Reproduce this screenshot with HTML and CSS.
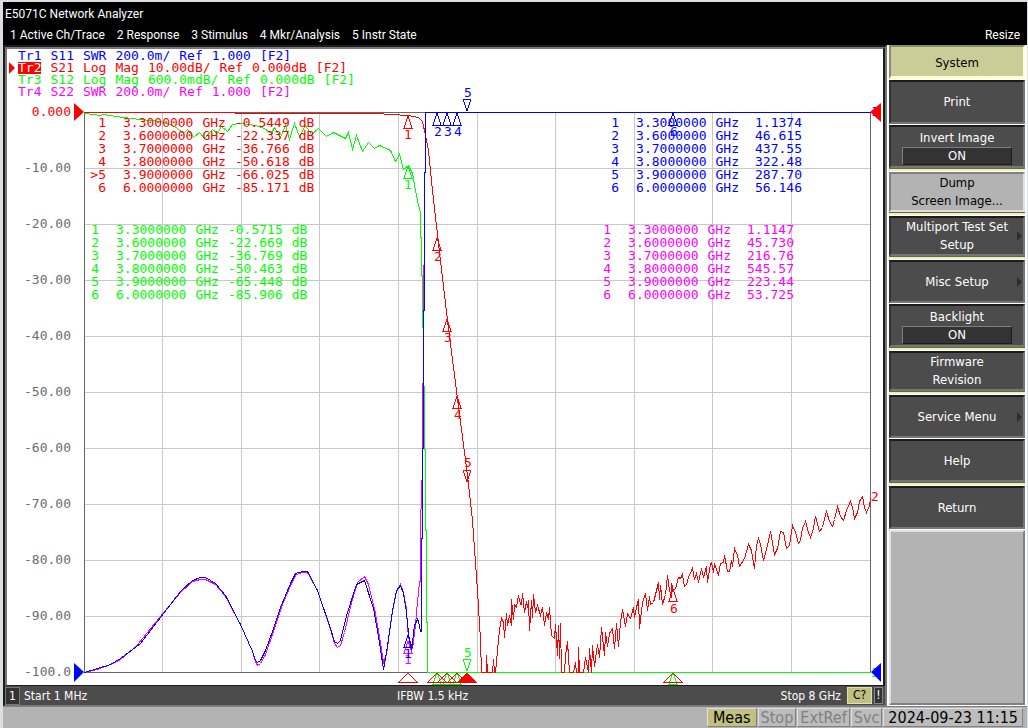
FILE: index.html
```
<!DOCTYPE html>
<html lang="en">
<head>
    <meta charset="UTF-8">
    <meta name="viewport" content="width=device-width, initial-scale=1.0">
    <title>E5071C Network Analyzer</title>
    <link rel="stylesheet" href="styles.css">
</head>
<body>
    <header class="titlebar">
        <div class="title">E5071C Network Analyzer</div>
        <nav class="menu">
            <button>1 Active Ch/Trace</button>
            <button>2 Response</button>
            <button>3 Stimulus</button>
            <button>4 Mkr/Analysis</button>
            <button>5 Instr State</button>
            <button class="resize">Resize</button>
        </nav>
    </header>

    <main class="workspace">
        <section class="channel">
            <div class="screen">
                <svg class="plot" viewBox="7 49 876 636">
                    <defs>
                        <path id="up" d="M0 0L-4 12H4Z"/>
                        <path id="down" d="M0 0L-4 -12H4Z"/>
                        <path id="foot" d="M0 0L-9 9H9Z"/>
                    </defs>

                    <!-- grid -->
                    <g transform="translate(0.5 0.5)">
                        <path class="grid" d="M162 112V672M241 112V672M319 112V672M398 112V672M477 112V672M555 112V672M634 112V672M712 112V672M791 112V672M84 168H870M84 224H870M84 280H870M84 336H870M84 392H870M84 448H870M84 504H870M84 560H870M84 616H870"/>
                        <path class="frame" d="M84 112H870V672H84Z"/>
                    </g>

                    <!-- scale -->
                    <g class="scale">
                        <text class="red" x="71" y="116">0.000</text>
                        <text x="71" y="172">-10.00</text>
                        <text x="71" y="228">-20.00</text>
                        <text x="71" y="284">-30.00</text>
                        <text x="71" y="340">-40.00</text>
                        <text x="71" y="396">-50.00</text>
                        <text x="71" y="452">-60.00</text>
                        <text x="71" y="508">-70.00</text>
                        <text x="71" y="564">-80.00</text>
                        <text x="71" y="620">-90.00</text>
                        <text x="71" y="676">-100.0</text>
                    </g>

                    <!-- traces -->
                    <g transform="translate(0.5 0.5)">
                        <polyline class="trace magenta" points="84,672 97,669 110,664 120,659 132,649 138,643 160,616 180,592 192,581 200,579 205,579 215,584 225,596 240,624 252,651 255,661 257,665 260,663 265,654 273,631 282,604 291,583 296,574 302,572 307,572 317,590 330,629 334,643 337,647 340,645 344,632 351,602 357,582 364,576 368,584 374,608 380,642 383,662 386,654 392,611 396,591 400,584 403,592 406,608 407,628 410,648 412,648 415,625 417,601 419,582 420,580 420,540 421,480 422,480 422,383 423,383 423,300 424,232 424,172 425,172 425,128"/>
                        <polyline class="trace green" points="84,113 100,115 103,114 115,116 140,119 160,121 172,125 177,128 183,133 187,129 193,137 199,132 204,138 212,129 217,133 221,126 227,131 232,124 240,123 255,125 264,128 271,133 274,127 280,137 285,125 289,139 294,123 299,136 305,125 311,134 318,128 326,136 333,132 345,138 348,132 352,149 356,135 362,151 368,142 374,148 379,145 390,150 395,161 399,154 403,169 408,165 412,173 415,190 418,205 420,212 420,237 421,237 421,275 422,275 422,327 423,327 423,386 424,386 424,449 425,449 425,530 426,530 426,622 427,622 427,672 870,672"/>
                        <polyline class="trace red" points="84,112 235,112 235,113 375,113 408,115 418,117 422,121 425,135 428,150 432,190 438,243 447,320 457,398 467,475 472,520 477,590 480,640 481,672 486,672 486,655 487,672 492,672 493,659 494,672 495,672 497,650 499,630 501,618 503,622 504,637 506,613 507,625 509,615 511,625 511,599 513,619 514,604 516,607 518,595 520,604 521,604 522,593 524,612 526,601 527,607 528,600 529,630 531,600 532,617 533,594 535,612 537,605 540,615 542,607 544,625 546,612 548,619 549,607 551,635 554,638 555,624 557,655 558,625 559,658 560,623 561,672 564,672 565,655 567,641 569,672 573,672 575,662 576,672 578,672 578,647 579,672 583,672 585,657 588,672 589,648 591,672 592,645 594,666 597,644 599,657 601,627 604,655 605,632 607,646 609,633 612,628 614,648 616,623 618,646 620,622 622,609 625,626 627,613 630,618 633,607 634,617 636,607 638,599 639,628 642,602 645,593 647,610 649,596 650,604 653,602 656,590 658,582 659,599 660,585 662,604 665,594 667,575 669,590 671,597 671,583 673,590 675,588 678,577 680,578 682,574 684,586 686,584 688,577 692,568 694,579 696,573 698,582 701,568 703,577 706,566 707,582 710,563 711,562 713,572 714,563 718,575 720,563 723,562 724,555 727,571 729,571 731,560 732,566 734,548 737,555 739,566 744,558 748,544 751,550 754,568 756,545 758,538 760,544 763,560 764,556 767,545 770,531 774,554 777,548 780,531 783,532 786,548 789,545 792,525 795,532 798,543 800,540 802,528 805,521 808,532 810,537 813,528 815,516 819,531 822,527 826,511 829,521 832,526 834,519 837,506 840,516 843,520 846,510 850,501 852,507 854,518 857,512 859,501 862,496 864,507 866,512 869,505 870,498"/>
                        <polyline class="trace blue" points="84,672 97,668 110,664 120,658 132,649 140,643 160,617 180,591 192,580 200,577 205,577 215,583 225,595 240,624 252,651 255,660 257,662 260,660 265,650 272,631 280,607 290,583 295,573 302,571 307,571 317,590 330,628 334,641 337,643 340,640 347,612 356,584 364,580 373,608 379,642 383,669 386,652 392,610 396,590 400,585 403,593 406,612 408,632 409,640 411,650 414,625 417,619 418,621 420,631 421,631 421,538 422,538 422,448 423,448 423,310 424,310 424,172 425,172 425,112 870,112"/>
                    </g>

                    <!-- trace markers -->
                    <g class="mark red">
                        <use href="#up" x="408" y="116"/><text x="408" y="139">1</text>
                        <use href="#up" x="437" y="238"/><text x="438" y="261">2</text>
                        <use href="#up" x="447" y="319"/><text x="448" y="342">3</text>
                        <use href="#up" x="457" y="396"/><text x="458" y="419">4</text>
                        <use href="#down" x="467" y="482"/><text x="468" y="467">5</text>
                        <use href="#up" x="673" y="589"/><text x="674" y="613">6</text>
                        <text x="875" y="501">2</text>
                    </g>
                    <g class="mark green">
                        <use href="#up" x="408" y="166"/><text x="408" y="189">1</text>
                        <use href="#up" x="437" y="672"/>
                        <use href="#up" x="447" y="672"/>
                        <use href="#up" x="457" y="672"/>
                        <use href="#down" x="467" y="671"/><text x="468" y="657">5</text>
                        <use href="#up" x="673" y="672"/>
                        <text x="875" y="677">3</text>
                    </g>
                    <g class="mark magenta">
                        <use href="#up" x="408" y="641"/><text x="408" y="664">1</text>
                    </g>
                    <g class="mark blue">
                        <use href="#up" x="408" y="635"/><text x="408" y="658">1</text>
                        <use href="#up" x="437" y="113"/><text x="438" y="136">2</text>
                        <use href="#up" x="447" y="113"/><text x="448" y="136">3</text>
                        <use href="#up" x="457" y="113"/><text x="458" y="136">4</text>
                        <use href="#down" x="467" y="111"/><text x="468" y="97">5</text>
                        <use href="#up" x="673" y="113"/><text x="674" y="136">6</text>
                        <text x="875" y="116">1</text>
                    </g>
                    <g class="mark red">
                        <use href="#foot" x="408" y="673"/>
                        <use href="#foot" x="437" y="673"/>
                        <use href="#foot" x="447" y="673"/>
                        <use href="#foot" x="457" y="673"/>
                        <use href="#foot" class="solid" x="467" y="673"/>
                        <use href="#foot" x="673" y="673"/>
                    </g>

                    <!-- reference level pointers -->
                    <path class="solid red" d="M74 103V121L84 112Z"/>
                    <path class="solid red" d="M881 103V122L870 112Z"/>
                    <path class="solid blue" d="M74 663V682L84 672Z"/>
                    <path class="solid blue" d="M881 663V682L871 672Z"/>
                </svg>

                <ul class="traces">
                    <li class="blue"><b>Tr1</b><span>S11</span><span>SWR</span><span>200.0m/</span><span>Ref</span><span>1.000</span><span>[F2]</span></li>
                    <li class="red active"><b>Tr2</b><span>S21</span><span>Log</span><span>Mag</span><span>10.00dB/</span><span>Ref</span><span>0.000dB</span><span>[F2]</span></li>
                    <li class="green"><b>Tr3</b><span>S12</span><span>Log</span><span>Mag</span><span>600.0mdB/</span><span>Ref</span><span>0.000dB</span><span>[F2]</span></li>
                    <li class="magenta"><b>Tr4</b><span>S22</span><span>SWR</span><span>200.0m/</span><span>Ref</span><span>1.000</span><span>[F2]</span></li>
                </ul>

                <table class="markers red s21">
                    <tr><th>1</th><td>3.3000000</td><td>GHz</td><td>-0.5449</td><td>dB</td></tr>
                    <tr><th>2</th><td>3.6000000</td><td>GHz</td><td>-22.337</td><td>dB</td></tr>
                    <tr><th>3</th><td>3.7000000</td><td>GHz</td><td>-36.766</td><td>dB</td></tr>
                    <tr><th>4</th><td>3.8000000</td><td>GHz</td><td>-50.618</td><td>dB</td></tr>
                    <tr><th>&gt;5</th><td>3.9000000</td><td>GHz</td><td>-66.025</td><td>dB</td></tr>
                    <tr><th>6</th><td>6.0000000</td><td>GHz</td><td>-85.171</td><td>dB</td></tr>
                </table>

                <table class="markers green s12">
                    <tr><th>1</th><td>3.3000000</td><td>GHz</td><td>-0.5715</td><td>dB</td></tr>
                    <tr><th>2</th><td>3.6000000</td><td>GHz</td><td>-22.669</td><td>dB</td></tr>
                    <tr><th>3</th><td>3.7000000</td><td>GHz</td><td>-36.769</td><td>dB</td></tr>
                    <tr><th>4</th><td>3.8000000</td><td>GHz</td><td>-50.463</td><td>dB</td></tr>
                    <tr><th>5</th><td>3.9000000</td><td>GHz</td><td>-65.448</td><td>dB</td></tr>
                    <tr><th>6</th><td>6.0000000</td><td>GHz</td><td>-85.906</td><td>dB</td></tr>
                </table>

                <table class="markers blue s11">
                    <tr><th>1</th><td>3.3000000</td><td>GHz</td><td>1.1374</td></tr>
                    <tr><th>2</th><td>3.6000000</td><td>GHz</td><td>46.615</td></tr>
                    <tr><th>3</th><td>3.7000000</td><td>GHz</td><td>437.55</td></tr>
                    <tr><th>4</th><td>3.8000000</td><td>GHz</td><td>322.48</td></tr>
                    <tr><th>5</th><td>3.9000000</td><td>GHz</td><td>287.70</td></tr>
                    <tr><th>6</th><td>6.0000000</td><td>GHz</td><td>56.146</td></tr>
                </table>

                <table class="markers magenta s22">
                    <tr><th>1</th><td>3.3000000</td><td>GHz</td><td>1.1147</td></tr>
                    <tr><th>2</th><td>3.6000000</td><td>GHz</td><td>45.730</td></tr>
                    <tr><th>3</th><td>3.7000000</td><td>GHz</td><td>216.76</td></tr>
                    <tr><th>4</th><td>3.8000000</td><td>GHz</td><td>545.57</td></tr>
                    <tr><th>5</th><td>3.9000000</td><td>GHz</td><td>223.44</td></tr>
                    <tr><th>6</th><td>6.0000000</td><td>GHz</td><td>53.725</td></tr>
                </table>
            </div>

            <div class="stimulus">
                <span class="ch">1</span>
                <span class="start">Start 1 MHz</span>
                <span class="ifbw">IFBW 1.5 kHz</span>
                <span class="stop">Stop 8 GHz</span>
                <span class="cal">C?</span>
                <span class="warn">!</span>
            </div>
        </section>

        <aside class="softkeys">
            <h2>System</h2>
            <button class="key">Print</button>
            <button class="key">Invert Image<span class="value">ON</span></button>
            <hr>
            <button class="key short selected">Dump<br>Screen Image...</button>
            <hr>
            <button class="key short more">Multiport Test Set<br>Setup</button>
            <hr>
            <button class="key more">Misc Setup</button>
            <button class="key">Backlight<span class="value">ON</span></button>
            <hr>
            <button class="key short">Firmware<br>Revision</button>
            <hr>
            <button class="key more">Service Menu</button>
            <button class="key">Help</button>
            <hr>
            <button class="key">Return</button>
            <div class="empty"></div>
        </aside>
    </main>

    <footer class="status">
        <span class="on">Meas</span>
        <span>Stop</span>
        <span>ExtRef</span>
        <span>Svc</span>
        <time>2024-09-23 11:15</time>
    </footer>
</body>
</html>
```
FILE: styles.css
```
* {
    box-sizing: border-box;
}
body {
    margin: 0;
    padding: 2px 1px 0 3px;
    height: 100vh;
    display: flex;
    flex-direction: column;
    background: #dcdfe0;
    font-family: "DejaVu Sans Condensed", "DejaVu Sans", sans-serif;
    font-stretch: condensed;
    font-size: 12px;
}
button {
    font: inherit;
    color: inherit;
    margin: 0;
    padding: 0;
    border: none;
    background: none;
}
.red { color: #ff0000; }
.green { color: #00ff00; }
.blue { color: #0000ff; }
.magenta { color: #ff00ff; }

/* title and menu */
.titlebar {
    background: #000;
    color: #fff;
    height: 43px;
    font-family: Roboto, "Noto Sans", sans-serif;
    font-stretch: normal;
}
.title {
    padding: 3px 2px 0;
    line-height: 18px;
}
.menu {
    display: flex;
    gap: 12px;
    padding: 3px 7px 0 7px;
    line-height: 18px;
}
.menu .resize {
    margin-left: auto;
}

/* channel window */
.workspace {
    flex: 1;
    min-height: 0;
    display: flex;
}
.channel {
    flex: 1;
    min-width: 0;
    display: flex;
    flex-direction: column;
    background: #4c4c4c;
    border: 2px solid #1c1c1c;
    border-right-color: #777;
    border-bottom: 1px solid #777;
}
.screen {
    flex: 1;
    min-height: 0;
    position: relative;
    background: #fff;
    border: 2px solid #777;
    border-right-color: #1c1c1c;
    border-bottom: 1px solid #1c1c1c;
    font-family: "DejaVu Sans Mono", "Liberation Mono", monospace;
    font-size: 13px;
}
.plot {
    display: block;
    width: 100%;
    height: 100%;
}
.grid, .frame, .trace, .mark use {
    fill: none;
    shape-rendering: crispEdges;
}
.grid { stroke: #c8c8c8; }
.frame { stroke: #666; }
.trace { stroke: currentColor; }
.mark use { stroke: currentColor; }
.mark text {
    fill: currentColor;
    text-anchor: middle;
}
.mark .solid, .solid { fill: currentColor; }
.scale text {
    fill: #6c6c6c;
    text-anchor: end;
}
.scale .red { fill: #ff0000; }

.traces {
    position: absolute;
    top: 1px;
    left: 11px;
    margin: 0;
    padding: 0;
    list-style: none;
    line-height: 12px;
}
.traces li {
    display: flex;
    gap: 9px;
}
.traces b {
    font-weight: normal;
    position: relative;
}
.traces .active b {
    color: #fff;
    background: #ff0000;
}
.traces .active b::before {
    content: "";
    position: absolute;
    left: -9px;
    border: 6px solid transparent;
    border-left-color: #ff0000;
    border-right: none;
}

.markers {
    position: absolute;
    border-collapse: collapse;
    line-height: 13px;
}
.markers th, .markers td {
    padding: 0 0 0 9px;
    font-weight: normal;
    text-align: right;
}
.markers th {
    padding: 0 8px 0 0;
    min-width: 25px;
}
.s21, .s11 { top: 67px; }
.s12, .s22 { top: 174px; }
.s21 { left: 82px; }
.s12 { left: 75px; }
.s11 { right: 81px; }
.s22 { right: 89px; }
.s11 td:last-child, .s22 td:last-child {
    padding-left: 16px;
}

.stimulus {
    display: flex;
    align-items: center;
    height: 19px;
    padding: 0 2px 0 0;
    color: #fff;
    white-space: nowrap;
}
.stimulus .ch {
    width: 15px;
    text-align: center;
    line-height: 16px;
    border: 1px solid #777;
    background: #333;
}
.stimulus .start {
    flex: 1;
    padding-left: 4px;
}
.stimulus .stop {
    flex: 1;
    text-align: right;
    padding-right: 6px;
}
.cal {
    width: 25px;
    text-align: center;
    line-height: 15px;
    color: #000;
    background: #c0c080;
    border: 1px solid #e0e0b0;
}
.warn {
    width: 9px;
    margin-left: 2px;
    text-align: center;
    line-height: 15px;
    background: #333;
    border: 1px solid #888;
}

/* softkeys */
.softkeys {
    width: 140px;
    display: flex;
    flex-direction: column;
    gap: 1px;
    padding: 0 2px 1px;
    background: #fff;
    font-size: 13px;
}
.softkeys h2 {
    margin: 0;
    height: 34px;
    font: inherit;
    line-height: 32px;
    text-align: center;
    background: #cccc99;
    border: 2px solid #8c8c66;
    border-right-color: #ffffcc;
    border-bottom: 3px solid #ffffcc;
}
.softkeys hr {
    flex: none;
    width: 100%;
    height: 4px;
    margin: -1px 0;
    border: none;
    border-top: 1px solid #66663f;
    border-bottom: 1px solid #fff;
    background: #f0f0bc;
}
.key {
    position: relative;
    flex: none;
    height: 43px;
    line-height: 18px;
    text-align: center;
    color: #fff;
    background: #4c4c4c;
    border: 2px solid #1c1c1c;
    border-left-color: #333;
    border-right-color: #777;
    border-bottom-color: #777;
}
.softkeys h2 + .key {
    height: 44px;
}
.key.short {
    height: 40px;
}
.key.selected {
    color: #000;
    background: #b3b3b3;
    border-color: #808080 #e0e0e0 #e0e0e0 #808080;
}
.key .value {
    display: block;
    width: 110px;
    margin: 0 auto;
    line-height: 16px;
    background: #333;
    border: 1px solid #808080;
    border-right-color: #1c1c1c;
    border-bottom-color: #1c1c1c;
}
.key.more::after {
    content: "";
    position: absolute;
    right: 1px;
    top: 50%;
    margin-top: -5px;
    border: 5px solid transparent;
    border-left-color: #2c2c2c;
    border-right: none;
}
.softkeys .empty {
    flex: 1;
    background: #b3b3b3;
    border: 2px solid #e0e0e0;
    border-right-color: #808080;
    border-bottom-color: #808080;
}

/* status bar */
.status {
    flex: none;
    display: flex;
    justify-content: flex-end;
    gap: 1px;
    height: 22px;
    padding: 1px 4px 1px 0;
    background: #b3b3b3;
    border-top: 1px solid #808080;
    font-size: 16px;
    line-height: 17px;
}
.status span, .status time {
    padding: 0 2px;
    border: 1px solid #e0e0e0;
    border-right-color: #808080;
    border-bottom-color: #808080;
    color: #808080;
    background: #bcbcbc;
}
.status time {
    padding: 0 4px;
    color: #000;
}
.status .on {
    padding: 0 5px;
    color: #000;
    background: #c0c080;
}
```
